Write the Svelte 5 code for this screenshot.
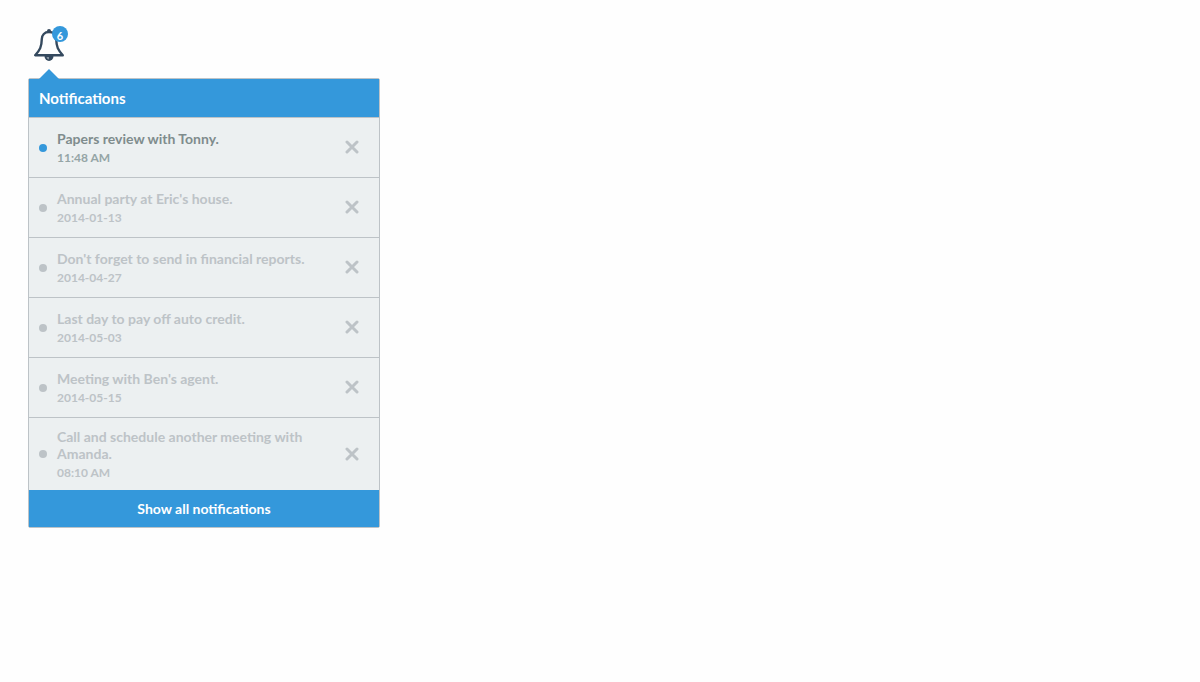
<script lang="ts">
    interface Notification {
        id: number;
        text: string;
        time: string;
        unread: boolean;
    }

    let open = true;
    let notifications: Notification[] = [
        { id: 1, text: "Papers review with Tonny.", time: "11:48 AM", unread: true },
        { id: 2, text: "Annual party at Eric's house.", time: "2014-01-13", unread: false },
        { id: 3, text: "Don't forget to send in financial reports.", time: "2014-04-27", unread: false },
        { id: 4, text: "Last day to pay off auto credit.", time: "2014-05-03", unread: false },
        { id: 5, text: "Meeting with Ben's agent.", time: "2014-05-15", unread: false },
        { id: 6, text: "Call and schedule another meeting with Amanda.", time: "08:10 AM", unread: false },
    ];

    function dismiss(id: number) {
        notifications = notifications.filter((n) => n.id !== id);
    }
</script>

<div class="widget">
    <button class="bell" aria-label="Notifications" aria-expanded={open} on:click={() => (open = !open)}>
        <svg width="30" height="33" viewBox="0 -1 30 33" fill="none">
            <circle cx="15" cy="2" r="2" fill="#34495e" />
            <path d="M10.5 27 H19.5 A4.5 5 0 0 1 10.5 27 Z" fill="#34495e" />
            <path d="M15 28 V30.5 A3 3 0 0 1 12.5 28 Z" fill="#8794a1" />
            <path
                d="M15 3 C10.5 3 8 6 7.8 10 C7.6 18 6 21 1.2 26.2 H28.8 C24 21 22.4 18 22.2 10 C22 6 19.5 3 15 3 Z"
                fill="#fefefe"
                stroke="#34495e"
                stroke-width="2.4"
                stroke-linejoin="round"
            />
        </svg>
        {#if notifications.length}
            <span class="badge">{notifications.length}</span>
        {/if}
    </button>

    {#if open}
        <section class="panel">
            <h3>Notifications</h3>
            <ul>
                {#each notifications as item (item.id)}
                    <li class:unread={item.unread}>
                        <span class="dot"></span>
                        <div class="content">
                            <p class="text">{item.text}</p>
                            <p class="time">{item.time}</p>
                        </div>
                        <button class="dismiss" aria-label="Dismiss: {item.text}" on:click={() => dismiss(item.id)}>
                            <svg width="14" height="15" viewBox="0 0 14 15">
                                <path d="M2 2 L12 12 M12 2 L2 12" stroke="currentColor" stroke-width="3" stroke-linecap="round" />
                            </svg>
                        </button>
                    </li>
                {/each}
            </ul>
            <a class="show-all" href="#all">Show all notifications</a>
        </section>
    {/if}
</div>

<style>
    :global(body) {
        background: #fefefe;
    }
    .widget {
        padding: 28px;
        font-family: Lato, sans-serif;
        font-weight: bold;
    }
    button {
        padding: 0;
        border: none;
        background: none;
        font-family: inherit;
        cursor: pointer;
    }
    .bell {
        position: relative;
        display: block;
        margin-left: 6px;
    }
    .bell svg,
    .dismiss svg {
        display: block;
    }
    .badge {
        position: absolute;
        top: -2px;
        right: -4px;
        width: 16px;
        height: 16px;
        border-radius: 50%;
        background: #3498db;
        color: #fff;
        font-size: 11px;
        font-weight: bold;
        line-height: 20px;
        text-align: center;
    }
    .panel {
        position: relative;
        box-sizing: border-box;
        max-width: 352px;
        margin-top: 17px;
        border: 1px solid #bdc3c7;
        border-radius: 2px;
        background: #ecf0f1;
    }
    /* arrow pointing at the bell */
    .panel::before {
        content: "";
        position: absolute;
        top: -10px;
        left: 10px;
        border: 10px solid transparent;
        border-top: none;
        border-bottom-color: #3498db;
    }
    h3 {
        margin: 0;
        padding: 0 10px;
        background: #3498db;
        color: #fff;
        font-size: 15px;
        line-height: 38px;
    }
    ul {
        margin: 0;
        padding: 0;
        list-style: none;
    }
    li {
        display: flex;
        align-items: center;
        box-sizing: border-box;
        min-height: 60px;
        padding: 10px 20px 10px 10px;
        border-top: 1px solid #bdc3c7;
        color: #bdc3c7;
    }
    .dot {
        width: 8px;
        height: 8px;
        margin-right: 10px;
        border-radius: 50%;
        background: #bdc3c7;
    }
    .content {
        flex: 1;
        margin-right: 30px;
    }
    p {
        margin: 0;
    }
    .text {
        font-size: 14px;
        line-height: 17px;
    }
    .time {
        margin-top: 3px;
        font-size: 12px;
        line-height: 15px;
    }
    .unread .dot {
        background: #3498db;
    }
    .unread .text {
        color: #7f8c8d;
    }
    .unread .time {
        color: #95a5a6;
    }
    .dismiss {
        color: #bdc3c7;
    }
    .show-all {
        display: block;
        background: #3498db;
        color: #fff;
        font-size: 14px;
        line-height: 37px;
        text-align: center;
        text-decoration: none;
    }
</style>
